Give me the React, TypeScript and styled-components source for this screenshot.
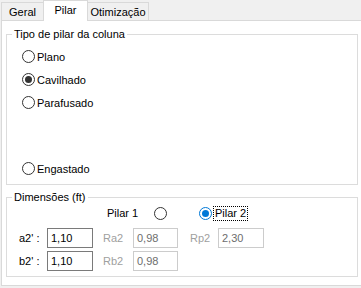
import React, {FC} from 'react';
import styled, {createGlobalStyle, css} from 'styled-components';

const blue = '#0078d7';
const line = '#dcdcdc';

const Global = createGlobalStyle`
  body {
    margin: 0;
    background: #f0f0f0;
  }
`;

const Root = styled.div`
  width: 361px;
  height: 288px;
  overflow: hidden;
  background: #f0f0f0;
  font-family: "Liberation Sans", Arial, sans-serif;
  font-size: 11px;
  color: #000;
`;

const TabStrip = styled.div`
  display: flex;
  align-items: flex-end;
  height: 20px;
  padding-left: 1px;
`;

const Tab = styled.div<{$w: number; $active?: boolean}>`
  box-sizing: border-box;
  width: ${p => p.$w}px;
  height: 18px;
  margin-left: -1px;
  border: 1px solid #d9d9d9;
  border-bottom: none;
  background: #f0f0f0;
  display: flex;
  align-items: center;
  justify-content: center;
  padding-top: 1px;
  &:first-child {
    margin-left: 0;
  }
  ${p => p.$active && css`
    position: relative;
    z-index: 1;
    height: 21px;
    margin-bottom: -1px;
    background: #fff;
    padding-top: 0;
    padding-bottom: 2px;
  `}
`;

const Panel = styled.div`
  box-sizing: border-box;
  width: 361px;
  height: 266px;
  margin-left: 1px;
  border: 1px solid #d9d9d9;
  background: #fff;
  padding: 7px 0 0 4px;
  display: flex;
  flex-direction: column;
  gap: 6px;
`;

const Group = styled.fieldset`
  box-sizing: border-box;
  width: 352px;
  margin: 0;
  padding: 0;
  border: 1px solid ${line};
  min-inline-size: 0;
`;

const Legend = styled.legend`
  margin-left: 5px;
  padding: 0 2px;
  line-height: 13px;
`;

const RadioList = styled.div`
  display: flex;
  flex-direction: column;
  padding: 4px 0 4px 15px;
`;

const RadioRow = styled.label<{$gap?: number}>`
  display: flex;
  align-items: center;
  height: 23px;
  margin-top: ${p => p.$gap ?? 0}px;
  gap: 2px;
`;

const Circle = styled.span<{$on?: boolean; $focus?: boolean}>`
  box-sizing: border-box;
  width: 13px;
  height: 13px;
  border-radius: 50%;
  border: 1px solid ${p => (p.$focus ? blue : '#333')};
  background: #fff;
  display: flex;
  align-items: center;
  justify-content: center;
  flex-shrink: 0;
  &::after {
    content: '';
    display: ${p => (p.$on ? 'block' : 'none')};
    width: 7px;
    height: 7px;
    border-radius: 50%;
    background: ${p => (p.$focus ? blue : '#333')};
  }
`;

const FocusText = styled.span`
  margin-left: 2px;
  outline: 1px dotted #000;
  outline-offset: 0;
  padding: 0 1px;
  line-height: 13px;
`;

const Body = styled.div`
  display: flex;
  flex-direction: column;
  padding: 1px 0 5px 12px;
`;

const PilarRow = styled.div`
  display: flex;
  align-items: center;
  height: 16px;
  padding-left: 88px;
  margin-bottom: 7px;
`;

const PilarOne = styled.span`
  width: 47px;
`;

const Spacer = styled.span`
  width: 32px;
`;

const Grid = styled.div`
  display: grid;
  grid-template-columns: 28px 46px 40px 45px 40px 46px;
  grid-auto-rows: 20px;
  row-gap: 3px;
  align-items: center;
`;

const FieldLabel = styled.span<{$off?: boolean; $pad?: number}>`
  padding-left: ${p => p.$pad ?? 0}px;
  color: ${p => (p.$off ? '#a0a0a0' : '#000')};
`;

const Input = styled.div<{$off?: boolean}>`
  box-sizing: border-box;
  height: 20px;
  border: 1px solid ${p => (p.$off ? '#cccccc' : '#7a7a7a')};
  background: #fff;
  color: ${p => (p.$off ? '#6d6d6d' : '#000')};
  padding-left: 3px;
  display: flex;
  align-items: center;
`;

const Radio: FC<{label: string; on?: boolean; gap?: number}> = ({label, on, gap}) => (
  <RadioRow $gap={gap}>
    <Circle $on={on}/>
    <span>{label}</span>
  </RadioRow>
);

export default function App() {
  return (
    <Root>
      <Global/>
      <TabStrip>
        <Tab $w={43}>Geral</Tab>
        <Tab $w={45} $active>Pilar</Tab>
        <Tab $w={62}>Otimização</Tab>
      </TabStrip>
      <Panel>
        <Group>
          <Legend>Tipo de pilar da coluna</Legend>
          <RadioList>
            <Radio label="Plano"/>
            <Radio label="Cavilhado" on/>
            <Radio label="Parafusado"/>
            <Radio label="Engastado" gap={43}/>
          </RadioList>
        </Group>
        <Group>
          <Legend>Dimensões (ft)</Legend>
          <Body>
            <PilarRow>
              <PilarOne>Pilar 1</PilarOne>
              <Circle/>
              <Spacer/>
              <Circle $on $focus/>
              <FocusText>Pilar 2</FocusText>
            </PilarRow>
            <Grid>
              <FieldLabel>a2' :</FieldLabel>
              <Input>1,10</Input>
              <FieldLabel $off $pad={10}>Ra2</FieldLabel>
              <Input $off>0,98</Input>
              <FieldLabel $off $pad={12}>Rp2</FieldLabel>
              <Input $off>2,30</Input>
              <FieldLabel>b2' :</FieldLabel>
              <Input>1,10</Input>
              <FieldLabel $off $pad={10}>Rb2</FieldLabel>
              <Input $off>0,98</Input>
            </Grid>
          </Body>
        </Group>
      </Panel>
    </Root>
  );
}
